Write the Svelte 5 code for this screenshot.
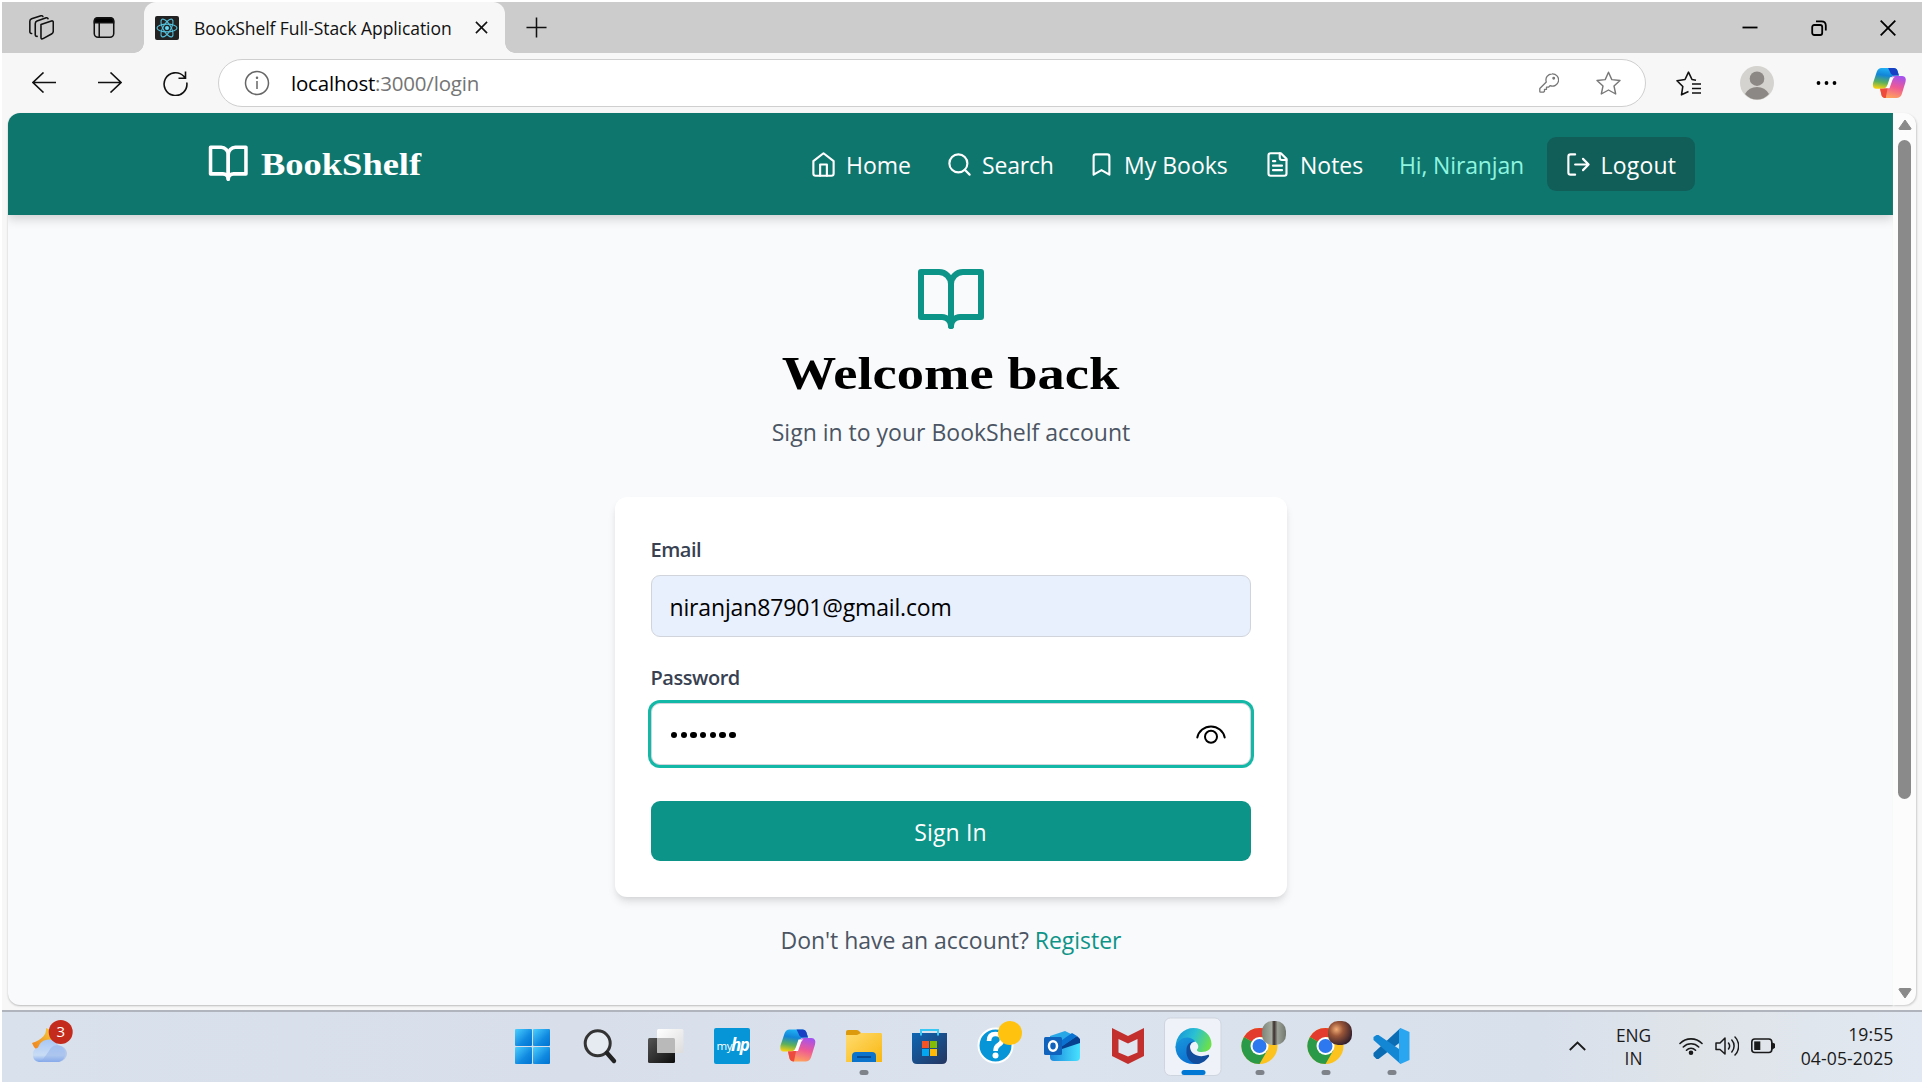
<script>
  const apps = [
    { id: 'start' },
    { id: 'search' },
    { id: 'taskview' },
    { id: 'myhp' },
    { id: 'copilot' },
    { id: 'explorer', running: true },
    { id: 'store' },
    { id: 'help' },
    { id: 'outlook' },
    { id: 'mcafee' },
    { id: 'edge', active: true },
    { id: 'chrome', running: true, avatar: 'url(#avatarA)' },
    { id: 'chrome', running: true, avatar: 'url(#avatarB)' },
    { id: 'vscode', running: true }
  ];
  let email = $state('niranjan87901@gmail.com');
</script>

{#snippet book()}
  <svg class="book" viewBox="0 0 24 24" fill="none" stroke="currentColor" stroke-width="2" stroke-linecap="round" stroke-linejoin="round">
    <path d="M2 3h6a4 4 0 0 1 4 4v14a3 3 0 0 0-3-3H2z" />
    <path d="M22 3h-6a4 4 0 0 0-4 4v14a3 3 0 0 1 3-3h7z" />
  </svg>
{/snippet}

{#snippet copilotShape()}
  <path d="M10 1H23Q26 1 27 4L28.5 9H25Q21 9 20 12L17 20Q15.5 23 12 23H4Q0 23 1 17L5 5Q6.500 1 10 1Z" fill="url(#copA)" />
  <path d="M17 1H23Q26 1 27 4L28.500 9H24Q20 9 19 5Z" fill="#1740c4" />
  <path d="M26 33H14Q11 33 10 30L8.500 23H12Q15.500 23 17 20L20 12Q21 9.500 25 9.500H32Q37 10 35.500 16L31.500 29Q30 33 26 33Z" fill="url(#copB)" />
  <path d="M8.500 23H12Q15.500 23 17 20L14.500 33Q11 33 10 30Z" fill="#ee4b3c" />
  <path d="M19 11H24Q22 12 21.500 14L18.500 22.500H13.500Q15.500 21.500 16.500 18.500Z" fill="#fff" />
{/snippet}

<svg class="defs" width="0" height="0" aria-hidden="true">
  <defs>
    <linearGradient id="copA" x1="0.5" y1="0" x2="0.3" y2="1"><stop offset="0" stop-color="#20b2f4" /><stop offset=".35" stop-color="#1285d8" /><stop offset=".7" stop-color="#5cb05c" /><stop offset="1" stop-color="#f4cf10" /></linearGradient>
    <linearGradient id="copB" x1="0.7" y1="0" x2="0.4" y2="1"><stop offset="0" stop-color="#a552ee" /><stop offset=".5" stop-color="#ee5a94" /><stop offset="1" stop-color="#ffa45c" /></linearGradient>
    <linearGradient id="win" x1="0" y1="0" x2="1" y2="1"><stop offset="0" stop-color="#4cd0ff" /><stop offset=".6" stop-color="#1089e0" /><stop offset="1" stop-color="#0073d2" /></linearGradient>
    <linearGradient id="dark" x1="0" y1="0" x2="1" y2="1"><stop offset="0" stop-color="#555" /><stop offset="1" stop-color="#0c0c0c" /></linearGradient>
    <linearGradient id="pane" x1="0" y1="0" x2="1" y2="1"><stop offset="0" stop-color="#fff" /><stop offset="1" stop-color="#dcdcdc" /></linearGradient>
    <linearGradient id="folder" x1="0" y1="0" x2="1" y2="1"><stop offset="0" stop-color="#ffdc70" /><stop offset="1" stop-color="#f9b710" /></linearGradient>
    <linearGradient id="bag" x1="0" y1="0" x2="1" y2="1"><stop offset="0" stop-color="#0e66b4" /><stop offset="1" stop-color="#25365f" /></linearGradient>
    <linearGradient id="mail" x1="0" y1="0" x2="1" y2="0"><stop offset="0" stop-color="#1a88dc" /><stop offset="1" stop-color="#48e2ff" /></linearGradient>
    <linearGradient id="edgeTop" x1="0" y1="0.2" x2="1" y2="0.5"><stop offset="0" stop-color="#1593d8" /><stop offset=".5" stop-color="#2ac0d4" /><stop offset="1" stop-color="#6ae04c" /></linearGradient>
    <linearGradient id="edgeMid" x1="0" y1="0" x2="0.5" y2="1"><stop offset="0" stop-color="#1a97dc" /><stop offset="1" stop-color="#0a70d0" /></linearGradient>
    <linearGradient id="cloud" x1="0" y1="0" x2="0" y2="1"><stop offset="0" stop-color="#a9c8f6" /><stop offset=".7" stop-color="#c9dcf4" /><stop offset="1" stop-color="#7fa5ea" /></linearGradient>
    <linearGradient id="moon" x1="1" y1="0" x2="0" y2="1"><stop offset="0" stop-color="#f2cd3c" /><stop offset="1" stop-color="#f07c1c" /></linearGradient>
    <linearGradient id="avatarA" x1="0" y1="0" x2="1" y2="0"><stop offset="0" stop-color="#7d8478" /><stop offset=".4" stop-color="#a4aa9f" /><stop offset=".5" stop-color="#382c2a" /><stop offset=".65" stop-color="#9ba197" /><stop offset="1" stop-color="#73786f" /></linearGradient>
    <radialGradient id="avatarB" cx=".35" cy=".35" r=".7"><stop offset="0" stop-color="#f3ad76" /><stop offset=".4" stop-color="#9a5638" /><stop offset="1" stop-color="#33202c" /></radialGradient>
  </defs>
</svg>

<div class="screen">
  <header class="tabs">
    <svg class="workspaces" viewBox="0 0 24 24" fill="none" stroke="#111" stroke-width="1.500" stroke-linejoin="round" stroke-linecap="round">
      <path d="M11.500 9.200 21.500 5.700Q23.300 5.300 23.300 7V15.500Q23.300 17 22 18L13.500 22.700Q11.500 23.500 11.500 21.500Z" />
      <path d="M7.800 20.500 6.800 20.400Q6 20 6 19V8.500Q6 6.500 7.700 5.800L16.500 2.700Q18 2.400 18.300 3.600" />
      <path d="M2.500 17.800 1.500 17.500Q.8 17 .8 16V6Q.8 4.300 2.500 3.600L11.500.8Q13 .5 13.300 1.500" />
    </svg>
    <svg class="tabmenu" viewBox="0 0 22 22" fill="none" stroke="#111" stroke-width="1.600"><rect x=".8" y=".8" width="20.400" height="20.400" rx="4" /><path d="M6 6v15" /><path d="M1 6V4q0-3 3-3h14q3 0 3 3v2z" fill="#000" /></svg>
    <div class="tab">
      <svg class="favicon" viewBox="0 0 24 24"><rect width="24" height="24" rx="2" fill="#222" /><g fill="none" stroke="#53c1de" stroke-width="1.100"><ellipse cx="12" cy="12" rx="10" ry="3.900" /><ellipse cx="12" cy="12" rx="10" ry="3.900" transform="rotate(60 12 12)" /><ellipse cx="12" cy="12" rx="10" ry="3.900" transform="rotate(120 12 12)" /></g><circle cx="12" cy="12" r="2" fill="#61dafb" /></svg>
      <span class="tabtitle">BookShelf Full-Stack Application</span>
      <svg class="tabclose" viewBox="0 0 14 14" fill="none" stroke="#111" stroke-width="1.700"><path d="M1 1 13 13M13 1 1 13" /></svg>
    </div>
    <svg class="plus" viewBox="0 0 22 22" fill="none" stroke="#111" stroke-width="1.600"><path d="M11 .5v21M.5 11h21" /></svg>
    <div class="winctl">
      <svg viewBox="0 0 16 16" fill="none" stroke="#000" stroke-width="1.800"><path d="M.5 7.500h15" /></svg>
      <svg viewBox="0 0 16 16" fill="none" stroke="#000" stroke-width="1.800"><rect x="1.200" y="5" width="10" height="10" rx="2" /><path d="M5 1.300H10.500Q14.800 1.300 14.800 5.600V10.500" /></svg>
      <svg viewBox="0 0 16 16" fill="none" stroke="#000" stroke-width="1.800"><path d="M.7.700 15.300 15.300M15.300.7.700 15.300" /></svg>
    </div>
  </header>

  <div class="toolbar">
    <svg class="back" viewBox="0 0 24 21" fill="none" stroke="#111" stroke-width="1.600"><path d="M24 10.500H1M11.500.5 1 10.500 11.500 20.500" /></svg>
    <svg class="fwd" viewBox="0 0 24 21" fill="none" stroke="#111" stroke-width="1.600"><path d="M0 10.500H23M12.500.5 23 10.500 12.500 20.500" /></svg>
    <svg class="reload" viewBox="0 0 25 25" fill="none" stroke="#111" stroke-width="1.600"><path d="M23.800 11.500A11.400 11.400 0 1 1 20.800 5.300L22 7M22.500.5V7.300H15.500" /></svg>
    <div class="address">
      <svg class="info" viewBox="0 0 26 26" fill="none" stroke="#666" stroke-width="1.500"><circle cx="13" cy="13" r="11.500" /><path d="M13 11v8" /><circle cx="13" cy="7.700" r=".5" fill="#666" /></svg>
      <span class="url">localhost<i>:3000/login</i></span>
      <svg class="key" viewBox="0 0 20 20" fill="none" stroke="#777" stroke-width="1.300" stroke-linejoin="round"><path d="M13 .8A6.200 6.200 0 1 1 11 12.700L9.500 14.200H7.500V16.300H5.500V18.300L4.500 19.200H1.500Q.8 19.200.8 18.500V15.500L7.300 9A6.200 6.200 0 0 1 13 .8Z" /><circle cx="14.700" cy="5.300" r=".8" fill="#666" /></svg>
      <svg class="star" viewBox="0 0 25 25" fill="none" stroke="#777" stroke-width="1.400" stroke-linejoin="round"><path d="M12.500 1.200 15.800 8.600 24 9.500 18 15 19.700 23 12.500 19 5.300 23 7 15 1 9.500 9.200 8.600Z" /></svg>
    </div>
    <svg class="fav" viewBox="0 0 25 25" fill="none" stroke="#111" stroke-width="1.600" stroke-linejoin="round"><path d="M12.500 20.500 5.500 23.800 6.800 15.500 1 9.700 9 8.500 12.500 1.200 16 8.500 20 9.200M16 13h9M16 17.500h9M16 22h9" /></svg>
    <svg class="profile" viewBox="0 0 34 34"><circle cx="17" cy="17" r="17" fill="#d5d3cf" /><circle cx="17" cy="12.700" r="7.300" fill="#8c8885" /><path d="M5 28Q9 21 17 21T29 28Q24 33.500 17 33.500T5 28Z" fill="#8c8885" /></svg>
    <svg class="dots" viewBox="0 0 22 6"><circle cx="2.500" cy="3" r="1.900" /><circle cx="10.500" cy="3" r="1.900" /><circle cx="18.500" cy="3" r="1.900" /></svg>
    <svg class="cop" viewBox="0 0 37 34">{@render copilotShape()}</svg>
  </div>

  <div class="viewport">
    <div class="page">
      <nav>
        <div class="brand">{@render book()}<span>BookShelf</span></div>
        <div class="links">
          <a><svg viewBox="0 0 24 24"><path d="m3 9 9-7 9 7v11a2 2 0 0 1-2 2H5a2 2 0 0 1-2-2z" /><path d="M9 22V12h6v10" /></svg><span class="t-home">Home</span></a>
          <a><svg viewBox="0 0 24 24"><circle cx="11" cy="11" r="8" /><path d="m21 21-4.300-4.300" /></svg><span class="t-search">Search</span></a>
          <a><svg viewBox="0 0 24 24"><path d="m19 21-7-4-7 4V5a2 2 0 0 1 2-2h10a2 2 0 0 1 2 2v16z" /></svg><span class="t-books">My Books</span></a>
          <a><svg viewBox="0 0 24 24"><path d="M15 2H6a2 2 0 0 0-2 2v16a2 2 0 0 0 2 2h12a2 2 0 0 0 2-2V7Z" /><path d="M14 2v4a2 2 0 0 0 2 2h4M10 9H8M16 13H8M16 17H8" /></svg><span class="t-notes">Notes</span></a>
          <span class="hi">Hi, Niranjan</span>
          <button class="logout"><svg viewBox="0 0 24 24"><path d="M9 21H5a2 2 0 0 1-2-2V5a2 2 0 0 1 2-2h4M16 17l5-5-5-5M21 12H9" /></svg><span class="t-logout">Logout</span></button>
        </div>
      </nav>
      <main>
        {@render book()}
        <h1><span>Welcome back</span></h1>
        <p class="sub">Sign in to your BookShelf account</p>
        <form class="card">
          <label for="email">Email</label>
          <input id="email" class="field autofill" bind:value={email} />
          <label for="password">Password</label>
          <div class="field focused" id="password">
            <div class="mask">{#each { length: 7 } as _}<b></b>{/each}</div>
            <svg class="eye" viewBox="0 0 30 20" fill="none" stroke="#000" stroke-width="2" stroke-linecap="round"><path d="M1.300 13.500A14 14 0 0 1 28.700 13.500" /><circle cx="15" cy="12.800" r="6" /></svg>
          </div>
          <button class="signin" type="button">Sign In</button>
        </form>
        <p class="foot">Don't have an account? <a>Register</a></p>
      </main>
    </div>
    <div class="scrollbar">
      <svg viewBox="0 0 14 11"><path d="M7 1 13 9.500Q13 10.500 12 10.500H2Q1 10.500 1 9.500Z" fill="#8a8a8a" stroke="#8a8a8a" stroke-linejoin="round" /></svg>
      <div class="thumb"></div>
      <svg viewBox="0 0 14 11"><path d="M7 10 13 1.500Q13 .5 12 .5H2Q1 .5 1 1.500Z" fill="#8a8a8a" stroke="#8a8a8a" stroke-linejoin="round" /></svg>
    </div>
  </div>

  <footer class="taskbar">
    <svg class="weather" viewBox="0 0 48 46">
      <path d="M18 8Q19 18 4 23Q7 31 14 31Q24 31 24 20T18 8Z" fill="url(#moon)" />
      <path d="M11 42A7.500 7.500 0 0 1 10 27.500A11 11 0 0 1 30 25A8.800 8.800 0 0 1 31 42Z" fill="url(#cloud)" />
      <path d="M21 31A9.500 9.500 0 0 1 39 33A9 9 0 0 1 31 42H13Z" fill="#8fb0ea" opacity=".5" />
      <circle cx="32.700" cy="12" r="12" fill="#c42b1c" />
      <text x="32.700" y="17.300" text-anchor="middle" class="badge">3</text>
    </svg>
    <div class="apps">
      {#each apps as app}
        <svg class="app" viewBox="0 0 66 70">
          {#if app.active}<rect x="5.500" y="6" width="56.500" height="57.500" rx="6" fill="#eff3f9" stroke="#cfd5de" />{/if}
          {#if app.id === 'start'}
            <g fill="url(#win)"><rect x="16" y="17" width="17" height="17" rx="1" /><rect x="34" y="17" width="17" height="17" rx="1" /><rect x="16" y="35" width="17" height="17" rx="1" /><rect x="34" y="35" width="17" height="17" rx="1" /></g>
          {:else if app.id === 'search'}
            <circle cx="32.700" cy="31.300" r="12.500" fill="#e6ebf2" stroke="#333" stroke-width="3" /><path d="M42 41 49 49" stroke="#222" stroke-width="4.400" stroke-linecap="round" />
          {:else if app.id === 'taskview'}
            <rect x="17" y="26" width="27" height="25" rx="1.500" fill="url(#dark)" /><rect x="26" y="17" width="26.500" height="24" rx="1.500" fill="url(#pane)" /><path d="M26 26H42.500Q44 26 44 27.500V41H27.500Q26 41 26 39.500Z" fill="#b9b9b9" />
          {:else if app.id === 'myhp'}
            <rect x="17" y="16" width="36" height="36" rx="2" fill="#0696d7" /><text x="19.500" y="38" class="my">my</text><text x="34" y="39" class="hp">hp</text>
          {:else if app.id === 'copilot'}
            <g transform="translate(16.500 16.500)">{@render copilotShape()}</g>
          {:else if app.id === 'explorer'}
            <path d="M17 20Q17 18 19 18H28Q29.500 18 30.500 19.500L32 21V26H17Z" fill="#dd9a0c" /><path d="M17 23H28L32 21H52Q53 21 53 23V50H17Z" fill="url(#folder)" /><path d="M23 50V44Q23 40 27 40H43Q47 40 47 44V50Z" fill="#0b73cc" /><path d="M28 45H42" stroke="#064a94" stroke-width="2" />
          {:else if app.id === 'store'}
            <path d="M17 21H52V47Q52 52 47 52H22Q17 52 17 47Z" fill="url(#bag)" /><path d="M26 23.500V18H43V23.500" fill="none" stroke="#38c8f6" stroke-width="2" /><rect x="27" y="29" width="7" height="7" fill="#f35325" /><rect x="35" y="29" width="7" height="7" fill="#81bc06" /><rect x="27" y="37" width="7" height="7" fill="#05a6f0" /><rect x="35" y="37" width="7" height="7" fill="#ffba08" />
          {:else if app.id === 'help'}
            <circle cx="34.500" cy="33.500" r="17" fill="#0696d7" stroke="#fff" stroke-width="2" /><path d="M28 29Q28 22 34.500 22T41 28Q41 31 37.500 33Q34.500 35 34.500 39" fill="none" stroke="#fff" stroke-width="4.600" /><circle cx="34.500" cy="43.500" r="3" fill="#fff" /><circle cx="49" cy="21" r="12" fill="#ffc20e" />
          {:else if app.id === 'outlook'}
            <path d="M23 24 38 19 52 26V33L30 44H23Z" fill="#29a8e8" /><path d="M29 38 50 24 53 27V33L34 45Z" fill="#06408f" /><path d="M28 33 45 21 50 24 30 38Z" fill="#0a72d0" /><path d="M23 41 53 31V45Q53 49 49 49H27Q23 49 23 45Z" fill="url(#mail)" /><rect x="17" y="25" width="18" height="18" rx="1.500" fill="#0f63bd" /><ellipse cx="26" cy="34" rx="4" ry="4.700" fill="none" stroke="#fff" stroke-width="2.500" />
          {:else if app.id === 'mcafee'}
            <path d="M19 16 35 24 51 16V44L35 52 19 44Z" fill="#c22f2d" /><path d="M25.500 27 35 31.500 44.500 27V40.500L35 44.500 25.500 40.500Z" fill="#e0e6f0" />
          {:else if app.id === 'edge'}
            <g transform="translate(16.500 16)"><path d="M0 20C0 8 8 0 18 0S36 7 36 16C36 21 32 24 26 24C22 24 20.500 22.500 22 21C24 18 22 15 19 13C14 10 4 11 0 20Z" fill="url(#edgeTop)" /><path d="M0 19C3 9 14 6.500 20 13.500C15 14 12 20 14 26C16 32 22 35 27 34C24 36 20 36 18 36C8 36 0 29 0 19Z" fill="url(#edgeMid)" /><path d="M11 22C10 30 16 36 22 36C27 35.500 31 32 33.500 28.500C34 27 33 26.500 32 27C24 30 15 27 14.500 19C14.500 16 16 14 18 13.500C14 14 11 17 11 22Z" fill="#124c9c" /></g>
          {:else if app.id === 'chrome'}
            <g transform="translate(34.500 34)"><circle r="18" fill="#fcc31e" /><path d="M0 0 -15.600 -9A18 18 0 0 1 15.600 -9H0Z" fill="#e33b2e" /><path d="M-15.600 -9A18 18 0 0 0 0 18L7.800 4.500 0 0Z" fill="#2a9a48" /><circle r="9" fill="#fff" /><circle r="7" fill="#2d78ee" /></g>
            <rect x="37" y="9" width="24" height="24" rx="10" fill={app.avatar} />
          {:else if app.id === 'vscode'}
            <path d="M43.500 16 16.500 41V44L19.500 47H21.500L43.500 30Z" fill="#0b6cb4" /><path d="M43.500 52 16.500 28V25L19.500 23H21.500L43.500 38Z" fill="#1487d4" /><path d="M43.500 16 52.500 20V48L43.500 52 42 50V18Z" fill="#2aa5f0" />
          {/if}
          {#if app.active}<rect x="22.500" y="58" width="24" height="5" rx="2.500" fill="#0078d4" />{:else if app.running}<rect x="30.500" y="58" width="9" height="5" rx="2.500" fill="#7e838a" />{/if}
        </svg>
      {/each}
    </div>
    <div class="tray">
      <svg class="chev" viewBox="0 0 17 10" fill="none" stroke="#1a1a1a" stroke-width="1.800"><path d="M.8 9 8.500 1.500 16.200 9" /></svg>
      <div class="lang"><span>ENG</span><span>IN</span></div>
      <svg class="wifi" viewBox="0 0 24 20" fill="none" stroke="#1a1a1a" stroke-width="1.600" stroke-linecap="round"><path d="M1 7.500A15.500 15.500 0 0 1 23 7.500M4.300 11A10.800 10.800 0 0 1 19.700 11M7.500 14.200A6.300 6.300 0 0 1 16.500 14.200" /><circle cx="12" cy="16.800" r="1.500" fill="#1a1a1a" /></svg>
      <svg class="vol" viewBox="0 0 24 20" fill="none" stroke="#1a1a1a" stroke-width="1.500" stroke-linecap="round" stroke-linejoin="round"><path d="M1 7H5L10 2V18L5 13.500H1ZM13.500 7A5 5 0 0 1 13.500 13M16.800 4A9 9 0 0 1 16.800 16M20 1A13 13 0 0 1 20 19" /></svg>
      <svg class="bat" viewBox="0 0 24 16" fill="none" stroke="#1a1a1a" stroke-width="1.600"><rect x=".8" y="1" width="20" height="13.500" rx="3" /><rect x="4" y="4.200" width="4.500" height="7" fill="#1a1a1a" /><path d="M21.500 5.500 23.500 6.500V9L21.500 10.500Z" fill="#1a1a1a" /></svg>
      <div class="clock"><span class="time">19:55</span><span class="date">04-05-2025</span></div>
    </div>
  </footer>
</div>

<style>
  :global(body) { background: #fff; }
  .defs { position: absolute; }
  svg { display: block; flex: none; }
  .screen { box-sizing: border-box; width: 1924px; height: 1084px; padding: 2px; display: flex; flex-direction: column; font-family: 'Open Sans', 'Noto Sans', sans-serif; overflow: hidden; }
  .tabs { height: 51px; flex: none; background: #ccc; display: flex; align-items: center; }
  .workspaces { width: 25px; height: 25px; margin: 0 0 0 26.500px; }
  .tabmenu { width: 22px; height: 21px; margin: 0 0 0 39.500px; }
  .tab { position: relative; margin-left: 29px; width: 361px; height: 51px; box-sizing: border-box; border-radius: 12px 12px 0 0; background: #f7f7f7; display: flex; align-items: center; padding-left: 11px; }
  .tab::before, .tab::after { content: ''; position: absolute; bottom: 0; width: 10px; height: 10px; }
  .tab::before { left: -10px; background: radial-gradient(circle at 0 0, transparent 9.5px, #f7f7f7 10px); }
  .tab::after { right: -10px; background: radial-gradient(circle at 100% 0, transparent 9.5px, #f7f7f7 10px); }
  .favicon { width: 24px; height: 24px; }
  .tabtitle { width: 281px; margin-left: 15px; font-size: 17.500px; letter-spacing: -.07px; white-space: nowrap; color: #111; }
  .tabclose { width: 13px; height: 13px; }
  .plus { width: 21px; height: 21px; margin-left: 21px; }
  .winctl { margin-left: auto; display: flex; gap: 53px; padding-right: 26.500px; }
  .winctl svg { width: 16px; height: 16px; }

  .toolbar { height: 60px; flex: none; background: #f7f7f7; display: flex; align-items: center; padding-left: 30px; }
  .back { width: 24px; height: 21px; }
  .fwd { width: 24px; height: 21px; margin-left: 42px; }
  .back, .fwd { margin-bottom: 2px; }
  .reload { width: 25px; height: 25px; margin-left: 41px; }
  .address { margin-left: 30px; box-sizing: border-box; width: 1428px; height: 48px; border: 1.500px solid #cfcfcf; border-radius: 24px; background: #fff; display: flex; align-items: center; padding-left: 25px; }
  .info { width: 26px; height: 26px; }
  .url { margin-left: 21px; flex: 1; font-size: 20.500px; letter-spacing: -.2px; color: #000; }
  .url i { font-style: normal; color: #757575; }
  .key { width: 20px; height: 20px; margin-right: 37px; }
  .star { width: 25px; height: 25px; margin-right: 24px; }
  .fav { width: 25px; height: 25px; margin-left: 29.500px; }
  .profile { width: 34px; height: 34px; margin-left: 39.500px; }
  .dots { width: 22px; height: 6px; margin-left: 42px; }
  .cop { width: 35px; height: 32px; margin-left: 33.500px; }

  .viewport { height: 897px; flex: none; box-sizing: border-box; background: #f7f7f7; padding: 0 6px 5px; display: flex; }
  .page { width: 1885px; height: 892px; background: #f9fafc; border-radius: 12px 0 0 12px; overflow: hidden; box-shadow: 0 1px 2px #bbb; }
  nav { height: 102px; box-sizing: border-box; background: #0f766e; box-shadow: 0 4px 10px rgba(0, 0, 0, .17); padding-left: 199px; color: #fff; display: flex; align-items: center; }
  .brand { display: flex; align-items: center; width: 603px; }
  .brand .book { width: 42.500px; height: 42.500px; margin-top: -1px; }
  .brand span { margin-left: 11px; font: bold 32px 'Liberation Serif', serif; transform: scaleX(1.14); transform-origin: 0 50%; }
  .links { display: grid; grid-template-columns: 136px 142px 176px 134px 149px 148px; align-items: center; font-size: 23px; white-space: nowrap; }
  .links a, .logout { display: flex; align-items: center; gap: 9px; }
  .links a span, .hi, .t-logout { padding-top: 1.500px; }
  .links svg { width: 27px; height: 27px; fill: none; stroke: #fff; stroke-width: 1.900; stroke-linecap: round; stroke-linejoin: round; }
  .t-search { letter-spacing: -.2px; }
  .t-logout { letter-spacing: .2px; }
  .hi { color: #8ef5e0; padding-left: 1px; letter-spacing: -.15px; }
  .logout { box-sizing: border-box; height: 54px; border: 0; border-radius: 9px; background: #115e59; color: #fff; font: inherit; padding: 0 0 0 17.500px; }

  main { display: flex; flex-direction: column; align-items: center; padding-top: 48px; }
  main > .book { width: 72px; height: 72px; color: #0d9488; }
  h1 { margin: 11px 0 0; font: bold 47px/54px 'Liberation Serif', serif; color: #000; }
  h1 span { display: inline-block; transform: scaleX(1.16); }
  .sub, .foot { margin: 14px 0 0; font-size: 23px; line-height: 36px; color: #4b5563; white-space: nowrap; padding-left: 1px; }
  .foot { margin-top: 25px; letter-spacing: -.03px; }
  .foot a { color: #0d9488; }
  .card { box-sizing: border-box; width: 672px; height: 400px; margin-top: 47px; padding: 38px 36px 36px; border-radius: 12px; background: #fff; box-shadow: 0 6px 9px -1px rgba(0, 0, 0, .1), 0 3px 6px -3px rgba(0, 0, 0, .1); display: flex; flex-direction: column; }
  label { font-size: 20px; line-height: 30px; font-weight: 600; color: #374151; letter-spacing: -.45px; }
  .field { box-sizing: border-box; width: 600px; height: 62px; flex: none; margin-top: 10px; padding: 0 18px; border: 1.500px solid #d1d5db; border-radius: 9px; font-family: inherit; font-size: 23px; color: #000; display: flex; align-items: center; outline: 0; background: #fff; }
  .autofill { background: #e8f0fe; margin-bottom: 26px; padding-top: 2px; letter-spacing: -.15px; }
  .focused { box-shadow: 0 0 0 3px #14b8a6; }
  .mask { display: flex; gap: 3.300px; padding: 2px 0 0 1.500px; }
  .mask b { width: 6.400px; height: 6.400px; border-radius: 50%; background: #000; }
  .eye { width: 30px; height: 20px; margin-left: auto; margin-right: 5.500px; }
  .signin { height: 60px; flex: none; margin-top: 36px; border: 0; border-radius: 9px; background: #0d9488; color: #fff; font-family: inherit; font-size: 23px; letter-spacing: .15px; padding: 2px 0 0; }

  .scrollbar { width: 23px; height: 892px; box-sizing: border-box; background: #fcfcfc; border-radius: 0 12px 12px 0; box-shadow: 1px 1px 2px #ccc; display: flex; flex-direction: column; align-items: center; padding: 6px 0 6px; }
  .scrollbar svg { width: 14px; height: 11px; }
  .thumb { width: 13px; height: 659px; margin: 10px 0 auto; border-radius: 7px; background: #8a8a8a; }

  .taskbar { height: 72px; flex: none; box-sizing: border-box; border-top: 2px solid #b0b5bd; background: linear-gradient(90deg, #d9e1ec 0%, #d8dfea 30%, #dbe3ee 55%, #d8e0ec 80%, #dfe4e9 88%, #e1e8f1 100%); display: flex; }
  .weather { width: 48px; height: 46px; margin: 8px 0 0 26px; }
  .badge { font-size: 15px; fill: #fff; }
  .apps { display: flex; margin-left: 423px; }
  .app { width: 66px; height: 70px; }
  .my { font-size: 11.500px; fill: #fff; letter-spacing: -.3px; }
  .hp { font: italic bold 17px 'Open Sans', sans-serif; fill: #fff; letter-spacing: -1.500px; }
  .tray { display: flex; align-items: center; margin: -1px 0 1px 145.500px; color: #1a1a1a; font-size: 17.300px; line-height: 23px; }
  .chev { width: 17px; height: 10px; }
  .lang { width: 40px; margin-left: 28px; padding-top: 1px; display: flex; flex-direction: column; align-items: center; }
  .wifi { width: 24px; height: 20px; margin-left: 25px; }
  .vol { width: 24px; height: 20px; margin-left: 12px; }
  .bat { width: 24px; height: 16px; margin-left: 12px; }
  .clock { width: 119px; margin-top: -1px; display: flex; flex-direction: column; align-items: flex-end; font-size: 17.600px; line-height: 24px; letter-spacing: .1px; }
</style>
